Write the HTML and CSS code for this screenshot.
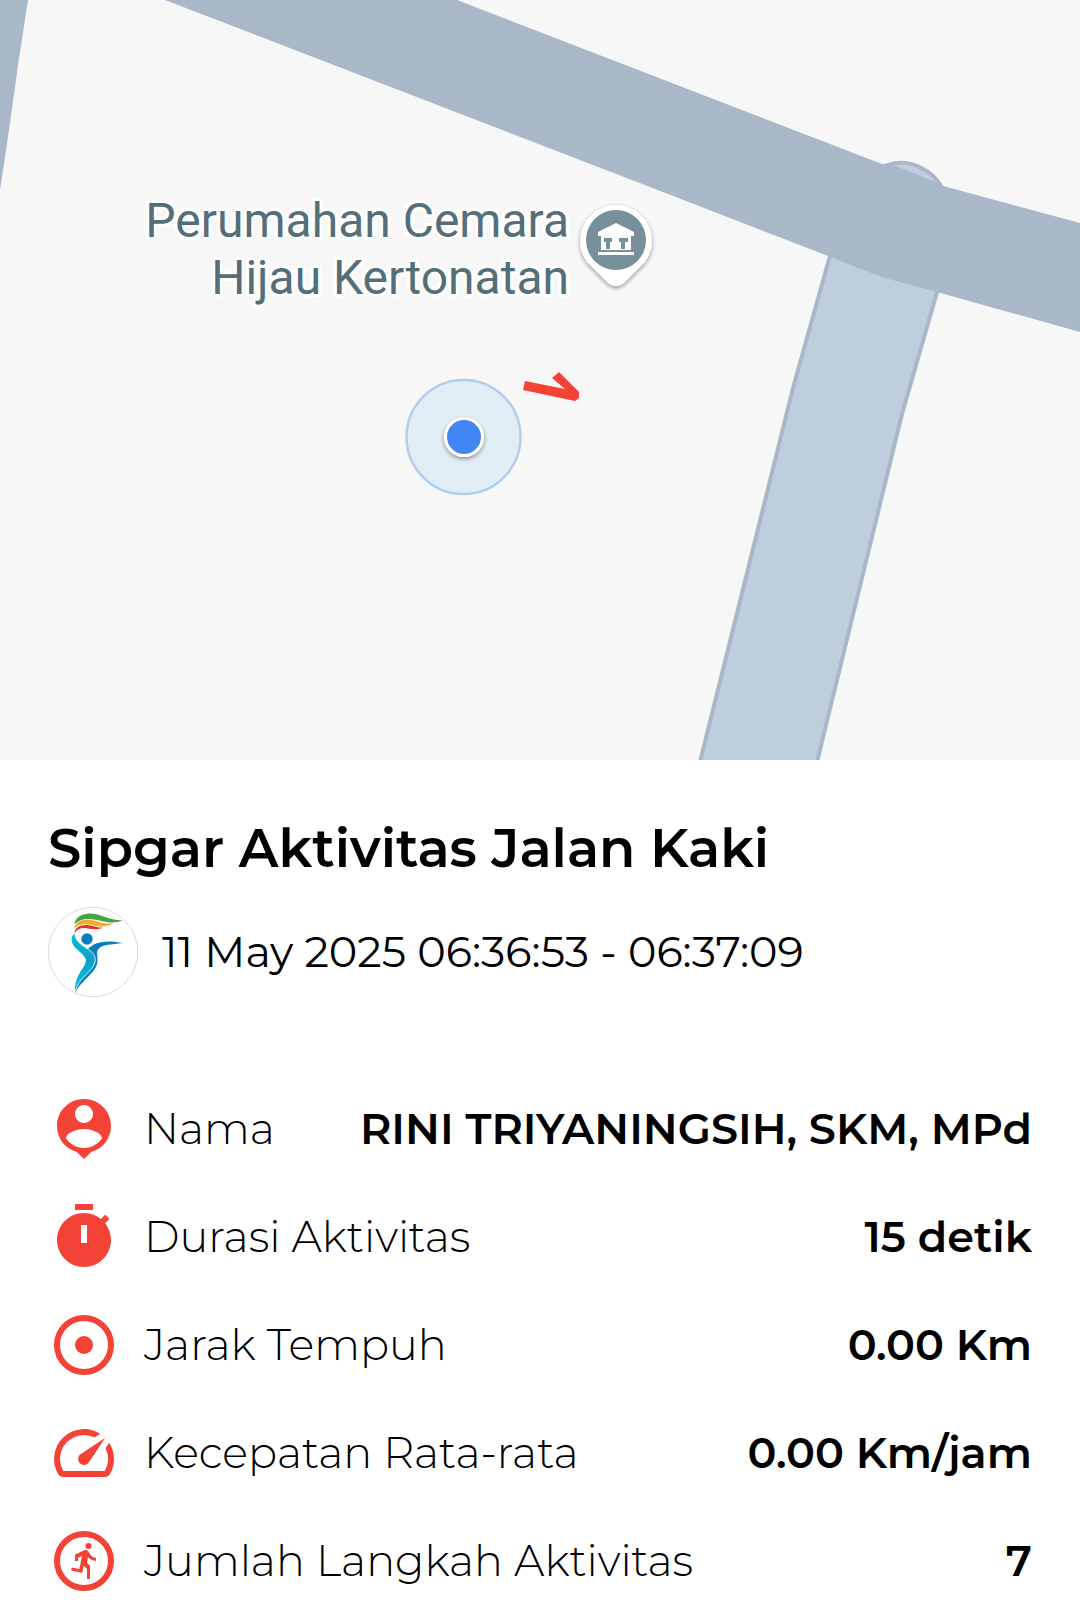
FILE: index.html
```html
<!DOCTYPE html>
<html lang="id">
<head>
<meta charset="utf-8">
<meta name="viewport" content="width=device-width, initial-scale=1">
<title>Sipgar Aktivitas Jalan Kaki</title>
<link rel="stylesheet" href="styles.css">
</head>
<body>
<main class="activity">
  <svg class="map" viewBox="0 0 1080 760" role="img" aria-label="Peta aktivitas">
    <defs>
      <filter id="shadow" x="-30%" y="-30%" width="160%" height="160%">
        <feDropShadow dx="0" dy="2" stdDeviation="2" flood-color="#000" flood-opacity=".4"/>
      </filter>
    </defs>
    <rect width="1080" height="760" fill="#f7f7f7"/>
    <!-- roads -->
    <path d="M0 0H28L18 65Q8 139 0 190Z" fill="#a9b8c9"/>
    <path d="M888 165Q907 159 923 169Q934 174 941 186Z" fill="#bfcfe0" stroke="#a9b8c9" stroke-width="4"/>
    <path d="M840 220L793 388Q765 503 700 762H817L902 414L952 240Z" fill="#bfcedf" stroke="#a9b8c9" stroke-width="4"/>
    <path d="M165 0H457L882 164Q914 178 947 187L1080 223V332L937 292L885 278Q860 269 828 256L650 187Z" fill="#a9b8c9"/>
    <!-- place -->
    <g class="map-label" text-anchor="end">
      <text x="569" y="237">Perumahan Cemara</text>
      <text x="569" y="294">Hijau Kertonatan</text>
    </g>
    <path d="M616 205A36 36 0 0 0 580 241C580 253 586 262 594 269L607 282Q616 290 625 282L638 269C646 262 652 253 652 241A36 36 0 0 0 616 205Z" fill="#fff" filter="url(#shadow)"/>
    <circle cx="616" cy="240" r="30" fill="#78909c"/>
    <path fill="#fff" fill-rule="evenodd" d="M616 223L634 232V236H631V250H601V236H598V232ZM604 238V242H606V249H610V242H612V238ZM619 238V242H621V249H625V242H628V238Z"/>
    <path d="M598 252H634V255H598Z" fill="#fff"/>
    <!-- current position and track -->
    <circle cx="463.500" cy="437" r="57" fill="#e1edf5" stroke="#b1cfec" stroke-width="2.500"/>
    <circle cx="464" cy="437" r="20" fill="#fff" filter="url(#shadow)"/>
    <circle cx="464" cy="437" r="17" fill="#4285f4"/>
    <path d="M525 381L565 389L552 378L559 372L579 392V398L575 401L523 390Z" fill="#f44336"/>
  </svg>

  <section class="details">
    <h1 class="title">Sipgar Aktivitas Jalan Kaki</h1>
    <div class="meta">
      <svg class="logo" viewBox="24 21 270 270" aria-hidden="true">
        <defs>
          <linearGradient id="body" x1="0" y1="0" x2="0" y2="1">
            <stop offset="0" stop-color="#08c4d8"/><stop offset=".45" stop-color="#0a9fca"/><stop offset="1" stop-color="#08c4d8"/>
          </linearGradient>
        </defs>
        <circle cx="159" cy="156" r="134" fill="#fff" stroke="#c4c4c4" stroke-width="2"/>
        <path d="M103 73C106 55 120 43 142 41C178 37 208 63 249 61C224 71 205 68 181 62C150 54 123 53 103 73Z" fill="#43a547"/>
        <path d="M103 86C104 69 119 60 139 59C167 58 187 74 221 70C203 80 187 82 168 78C142 71 119 68 103 86Z" fill="#f1ae2d"/>
        <path d="M104 99C103 85 118 75 137 75C155 75 166 83 188 83C173 89 159 88 147 86C127 82 114 84 104 99Z" fill="#df3431"/>
        <circle cx="141" cy="117" r="17" fill="#087fbd"/>
        <path d="M104 99C92 110 93 125 101 137C111 152 136 164 138 180C138 202 103 224 105 273C113 249 148 224 160 199C171 176 164 161 143 148C121 134 104 121 104 99Z" fill="url(#body)"/>
        <path d="M143 147C163 127 194 118 249 129C214 135 187 131 174 149C167 159 177 176 170 196C159 226 124 242 106 276C110 247 143 226 158 203C170 185 171 168 143 147Z" fill="#087fbd"/>
        <path d="M105 103C107 123 127 136 146 148C166 161 172 180 158 201C143 222 114 241 107 270" fill="none" stroke="#fff" stroke-width="2"/>
      </svg>
      <p class="time">11 May 2025 06:36:53 - 06:37:09</p>
    </div>

    <dl class="stats">
      <div class="stat">
        <svg class="icon" viewBox="0 0 24 24" aria-hidden="true"><path d="M12 2C7 2 3 6 3 11c0 4.170 2.700 7.550 6.500 8.600L12 22l2.500-2.400C18.300 18.550 21 15.170 21 11c0-5-4-9-9-9zm0 2c1.660 0 3 1.340 3 3s-1.340 3-3 3-3-1.340-3-3 1.340-3 3-3zm0 14.300c-2.500 0-4.710-1.280-6-3.220.03-1.990 4-3.080 6-3.080s5.970 1.090 6 3.080c-1.290 1.940-3.500 3.220-6 3.220z"/></svg>
        <dt>Nama</dt><dd>RINI TRIYANINGSIH, SKM, MPd</dd>
      </div>
      <div class="stat">
        <svg class="icon" viewBox="0 0 24 24" aria-hidden="true"><path fill-rule="evenodd" d="M15 1H9v2h6V1zM11 14h2V8h-2v6zM19.030 7.390l1.420-1.420c-.43-.51-.9-.99-1.410-1.410l-1.420 1.420C16.070 4.740 14.120 4 12 4c-4.970 0-9 4.030-9 9s4.020 9 9 9 9-4.030 9-9c0-2.120-.74-4.070-1.970-5.610z"/></svg>
        <dt>Durasi Aktivitas</dt><dd>15 detik</dd>
      </div>
      <div class="stat">
        <svg class="icon" viewBox="0 0 24 24" aria-hidden="true"><circle class="ring" cx="12" cy="12" r="9"/><circle cx="12" cy="12" r="3"/></svg>
        <dt>Jarak Tempuh</dt><dd>0.00 Km</dd>
      </div>
      <div class="stat">
        <svg class="icon" viewBox="0 0 24 24" aria-hidden="true"><path d="M20.380 8.570l-1.230 1.850a8 8 0 0 1-.22 7.580H5.070A8 8 0 0 1 15.580 6.850l1.850-1.230A10 10 0 0 0 3.350 19a2 2 0 0 0 1.720 1h13.850a2 2 0 0 0 1.740-1 10 10 0 0 0-.27-10.440zM10.590 15.410a2 2 0 0 0 2.830 0l5.660-8.490-8.490 5.660a2 2 0 0 0 0 2.830z"/></svg>
        <dt>Kecepatan Rata-rata</dt><dd>0.00 Km/jam</dd>
      </div>
      <div class="stat">
        <svg class="icon" viewBox="0 0 24 24" aria-hidden="true"><circle class="ring" cx="12" cy="12" r="9"/><circle cx="13.500" cy="7" r="1"/><path d="M9 12V9.800l3.100-1.400c.6-.2 1.100 0 1.400.5l.5.800c.4.700 1.200 1.200 2 1.300v1c-1.100-.1-2.100-.6-2.700-1.300l-.3 1.900 1 1V18h-1v-3.400l-1.100-1-.5 2.400-3.700-.8.2-1 2.600.5.800-4.400-1.300.6V12z"/></svg>
        <dt>Jumlah Langkah Aktivitas</dt><dd>7</dd>
      </div>
    </dl>
  </section>
</main>
</body>
</html>
```
FILE: styles.css
```css
* {
  box-sizing: border-box;
}

body {
  margin: 0;
  background: #fff;
  color: #000;
  font-family: Montserrat, Inter, "Liberation Sans", sans-serif;
}

.map {
  display: block;
  width: 100%;
  height: auto;
}

.map-label {
  fill: #546e7a;
  stroke: #fff;
  stroke-width: 6px;
  stroke-linejoin: round;
  paint-order: stroke;
  font-family: Roboto, sans-serif;
  font-size: 48px;
}

.details {
  padding: 56px 48px 24px;
}

.title {
  margin: 0 0 27px;
  font-size: 53px;
  font-weight: 600;
  line-height: 64px;
}

.meta {
  display: flex;
  align-items: center;
  gap: 24px;
  margin-bottom: 96px;
}

.logo {
  flex: none;
  width: 90px;
  height: 90px;
}

.time {
  margin: 0;
  font-size: 43px;
  font-weight: 400;
  line-height: 48px;
}

.stats {
  display: flex;
  flex-direction: column;
  gap: 36px;
  margin: 0;
}

.stat {
  display: flex;
  align-items: center;
  gap: 24px;
  font-size: 43px;
  line-height: 72px;
}

.icon {
  flex: none;
  width: 72px;
  height: 72px;
  fill: #f44336;
}

.ring {
  fill: none;
  stroke: #f44336;
  stroke-width: 2px;
}

.stat dt {
  font-weight: 300;
}

.stat dd {
  margin: 0 0 0 auto;
  font-weight: 600;
  text-align: right;
}
```
